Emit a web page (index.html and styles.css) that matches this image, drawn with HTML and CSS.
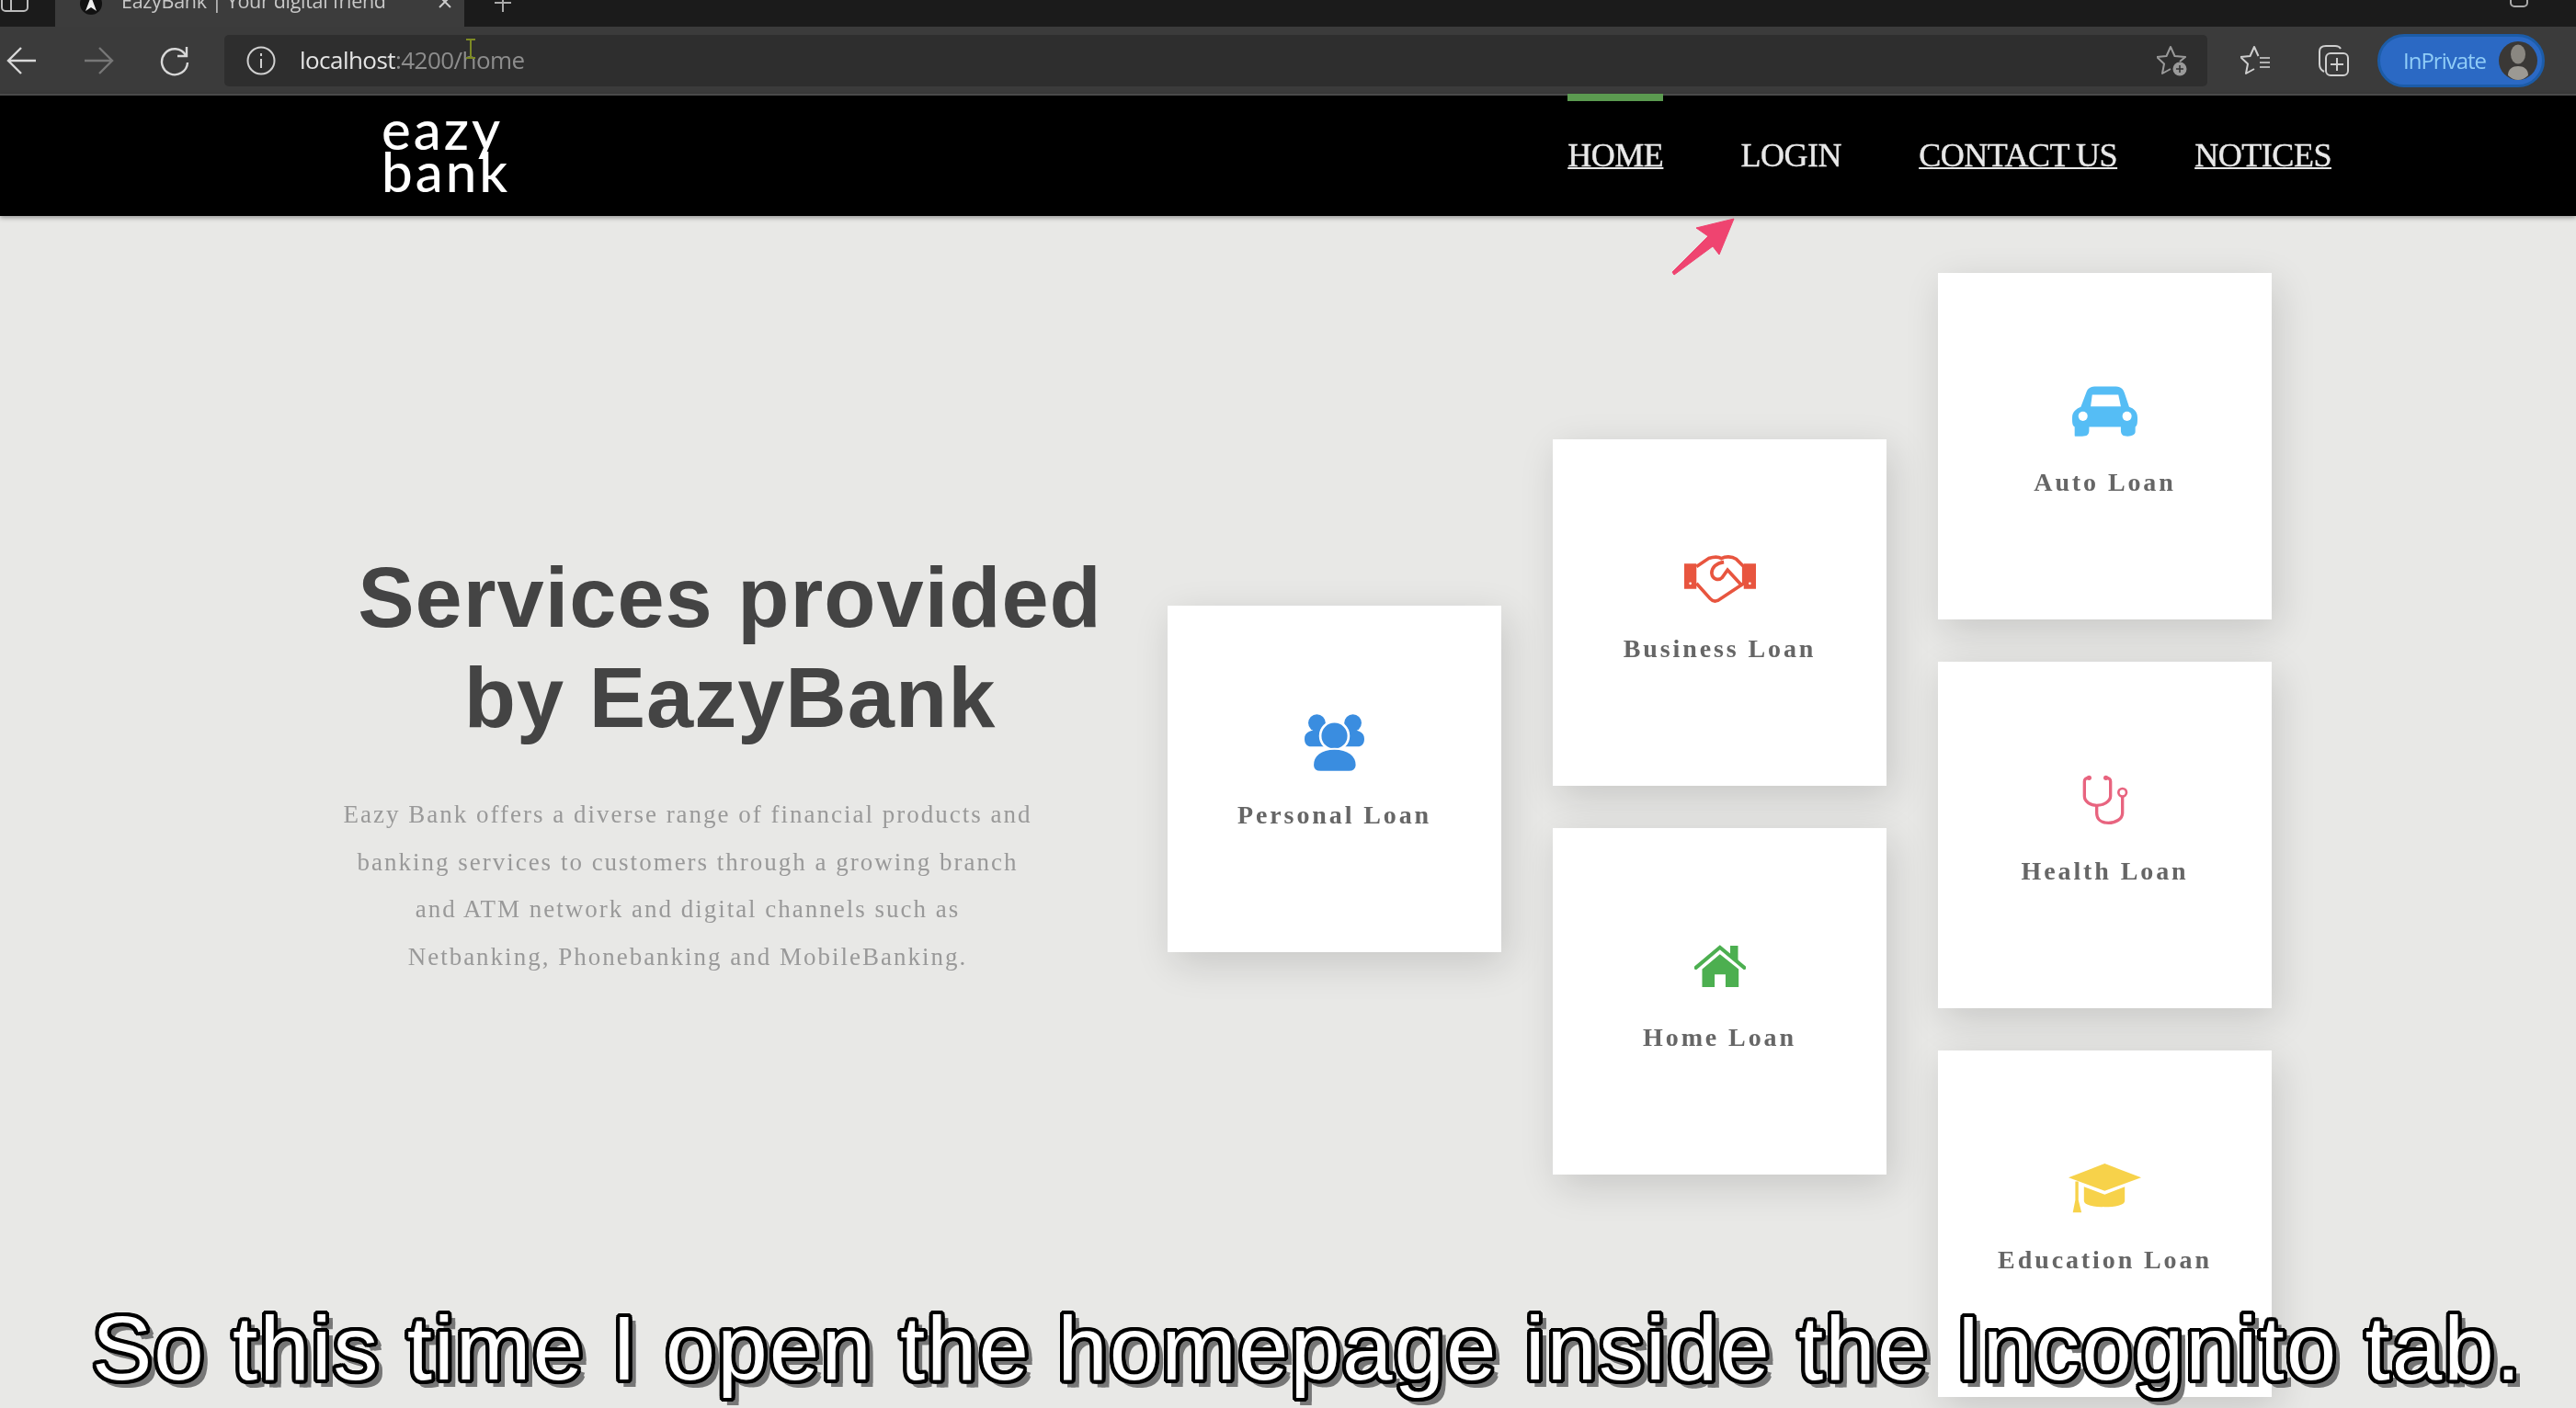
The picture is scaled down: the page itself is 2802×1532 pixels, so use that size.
FILE: index.html
```html
<!DOCTYPE html>
<html>
<head>
    <title>EazyBank | Your digital friend</title>
    <link rel="stylesheet" href="styles.css">
</head>
<body>
    <div class="tabstrip">
        <svg class="tabstrip__actions" width="32" height="14" viewBox="0 0 32 14"><path d="M2 -6V8a4 4 0 0 0 4 4h20a4 4 0 0 0 4-4V-6M12 -6V12" fill="none" stroke="#bbb" stroke-width="2"/></svg>
        <div class="tab">
            <svg class="tab__icon" width="26" height="22" viewBox="0 0 26 22"><circle cx="13" cy="4" r="12" fill="#111"/><path d="M7 12 13 -4l6 16-6-4z" fill="#eee"/></svg>
            <span class="tab__title">EazyBank | Your digital friend</span>
            <svg class="tab__close" width="16" height="14" viewBox="0 0 16 14"><path d="M2 -4 14 8M14 -4 2 8" stroke="#ccc" stroke-width="2"/></svg>
        </div>
        <svg class="tabstrip__new" width="20" height="14" viewBox="0 0 20 14"><path d="M10 -4V13M1 3H19" stroke="#aaa" stroke-width="2"/></svg>
        <svg class="tabstrip__window" width="24" height="10" viewBox="0 0 24 10"><path d="M2 -4V3a4 4 0 0 0 4 4h10a4 4 0 0 0 4-4V-4" fill="none" stroke="#aaa" stroke-width="2"/></svg>
    </div>

    <div class="toolbar">
        <svg class="toolbar__nav" width="34" height="34" viewBox="0 0 34 34"><path d="M32 17H3M16 3 2 17l14 14" fill="none" stroke="#d8d8d8" stroke-width="2.4"/></svg>
        <svg class="toolbar__nav toolbar__nav--off" width="34" height="34" viewBox="0 0 34 34"><path d="M2 17H31M18 3l14 14-14 14" fill="none" stroke="#777" stroke-width="2.4"/></svg>
        <svg class="toolbar__nav" width="34" height="34" viewBox="0 0 34 34"><path d="M29 11A14 14 0 1 0 31 19M30 2V12H20" fill="none" stroke="#d8d8d8" stroke-width="2.4"/></svg>
        <div class="address">
            <svg width="32" height="32" viewBox="0 0 32 32"><circle cx="16" cy="16" r="14.5" fill="none" stroke="#d0d0d0" stroke-width="2"/><path d="M16 14V24M16 8V11" stroke="#d0d0d0" stroke-width="2"/></svg>
            <div class="address__url"><b>localhost</b>:4200/home</div>
            <svg class="address__star" width="34" height="34" viewBox="0 0 34 34"><path d="M25 18 31 13 19.500 12 15 2 10.500 12 0 13 8 20.500 6 31 15 26" fill="none" stroke="#9a9a9a" stroke-width="2" stroke-linejoin="round"/><circle cx="25" cy="26" r="7.500" fill="#9a9a9a"/><path d="M25 22v8M21 26h8" stroke="#333" stroke-width="1.600"/></svg>
        </div>
        <svg class="toolbar__tool" width="34" height="34" viewBox="0 0 34 34"><path d="M19.500 12 15 2 10.500 12 0 13 8 20.500 6 31 15 26" fill="none" stroke="#cfcfcf" stroke-width="2" stroke-linejoin="round"/><path d="M21 14H32M21 19H32M21 24H32" stroke="#b0b0b0" stroke-width="2"/></svg>
        <svg class="toolbar__tool" width="34" height="36" viewBox="0 0 34 36"><path d="M7 30C3 28 2 26 2 22V8C2 4 5 2 9 2h10c3 0 5 1 6 3" fill="none" stroke="#cfcfcf" stroke-width="2"/><rect x="9" y="10" width="24" height="24" rx="5" fill="none" stroke="#cfcfcf" stroke-width="2"/><path d="M21 15V29M14 22H28" stroke="#cfcfcf" stroke-width="2"/></svg>
        <div class="inprivate">
            <span>InPrivate</span>
            <svg width="42" height="42" viewBox="0 0 42 42"><circle cx="21" cy="21" r="21" fill="#3a3836"/><ellipse cx="21" cy="14" rx="8" ry="10.500" fill="#8a8781"/><path d="M10 37C10 30 15 27 21 27s11 3 11 10c-3 3-7 5-11 5s-8-2-11-5z" fill="#9c9993"/></svg>
        </div>
        <svg class="cursor" width="14" height="22" viewBox="0 0 14 22"><path d="M2 1H12M7 1V21M2 21H12" stroke="#7d8a24" stroke-width="2"/></svg>
    </div>

    <header class="site-nav">
        <div class="logo">eazy<br>bank</div>
        <nav class="site-nav__links">
            <a class="site-nav__link site-nav__link--active">HOME</a>
            <a class="site-nav__link site-nav__link--plain">LOGIN</a>
            <a class="site-nav__link">CONTACT US</a>
            <a class="site-nav__link">NOTICES</a>
        </nav>
    </header>

    <svg class="pointer" width="72" height="64" viewBox="0 0 72 64"><path d="M69 1 28 11 41 20 2 59 4 62 46 31 53 40z" fill="#ef4470" stroke="#ef4470" stroke-linejoin="round"/></svg>

    <main class="services">
        <section class="intro">
            <h1>Services provided<br>by EazyBank</h1>
            <p>Eazy Bank offers a diverse range of financial products and<br>banking services to customers through a growing branch<br>and ATM network and digital channels such as<br>Netbanking, Phonebanking and MobileBanking.</p>
        </section>

        <div class="loans">
            <div class="loans__col loans__col--low">
                <div class="card">
                    <div class="card__icon">
                        <svg width="67" height="64" viewBox="0 0 200 190">
                            <circle cx="43" cy="28" r="28" fill="#3a8de0"/>
                            <circle cx="160" cy="28" r="28" fill="#3a8de0"/>
                            <path d="M3 80C3 60 20 52 40 52H70V105H25C10 105 3 95 3 80zM197 80C197 60 180 52 160 52H130V105H175C190 105 197 95 197 80z" fill="#3a8de0"/>
                            <circle cx="100" cy="70" r="46" fill="#3a8de0" stroke="#fff" stroke-width="8"/>
                            <path d="M30 165C30 135 55 112 100 112S172 135 172 165C172 180 160 187 148 187H55C42 187 30 180 30 165z" fill="#3a8de0" stroke="#fff" stroke-width="6"/>
                        </svg>
                    </div>
                    <h3>Personal Loan</h3>
                </div>
            </div>
            <div class="loans__col loans__col--mid">
                <div class="card">
                    <div class="card__icon card__icon--low">
                        <svg width="78" height="52" viewBox="0 0 235 155">
                            <path d="M0 27H40V110H0zM195 27H235V110H195z" fill="#e8553f"/>
                            <circle cx="20" cy="92" r="4" fill="#fff"/><circle cx="215" cy="92" r="4" fill="#fff"/>
                            <path d="M40 37 80 10C100 3 115 6 122 10 135 3 155 3 170 12L195 37V92L110 148C100 152 92 150 85 142L40 92" fill="none" stroke="#e8553f" stroke-width="11"/>
                            <path d="M130 22C105 25 90 40 90 58 92 78 112 85 125 72L142 48 190 100" fill="none" stroke="#e8553f" stroke-width="11"/>
                        </svg>
                    </div>
                    <h3>Business Loan</h3>
                </div>
                <div class="card">
                    <div class="card__icon">
                        <svg width="56" height="46" viewBox="0 0 165 135">
                            <path d="M5 73 82 8l78 65" fill="none" stroke="#4caf50" stroke-width="12" stroke-linecap="round"/>
                            <path d="M115 3h25v50l-25-20z" fill="#4caf50"/>
                            <path d="M25 78 82 30l60 48v57H100V95H65v40H25z" fill="#4caf50"/>
                        </svg>
                    </div>
                    <h3>Home Loan</h3>
                </div>
            </div>
            <div class="loans__col">
                <div class="card">
                    <div class="card__icon">
                        <svg width="71" height="56" viewBox="0 0 212 165">
                            <path d="M10 165a2 2 0 0 1-2-2V135C0 130 0 120 0 105 0 85 15 75 28 70L45 25C50 8 60 3 80 3H135C155 3 165 8 170 25L185 70C200 75 212 85 212 105 212 120 212 130 205 135V150C205 160 195 165 180 165 165 165 158 160 158 145V135H55V145C55 160 48 165 32 165z" fill="#55bdf5"/>
                            <path d="M65 30H150L158 68H60z" fill="#fff"/>
                            <circle cx="35" cy="100" r="15" fill="#fff"/><circle cx="178" cy="100" r="15" fill="#fff"/>
                        </svg>
                    </div>
                    <h3>Auto Loan</h3>
                </div>
                <div class="card">
                    <div class="card__icon">
                        <svg width="52" height="54" viewBox="0 0 156 162">
                            <path d="M25 10C14 10 10 14 10 22V70C10 88 30 100 50 100S95 88 95 70V22C95 14 90 10 80 10" fill="none" stroke="#e8647f" stroke-width="10"/>
                            <path d="M50 100V125C50 145 65 157 88 157S134 145 134 125V72" fill="none" stroke="#e8647f" stroke-width="10"/>
                            <circle cx="25" cy="10" r="8" fill="#e8647f"/><circle cx="80" cy="10" r="8" fill="#e8647f"/>
                            <circle cx="134" cy="58" r="13" fill="none" stroke="#e8647f" stroke-width="8"/>
                        </svg>
                    </div>
                    <h3>Health Loan</h3>
                </div>
                <div class="card">
                    <div class="card__icon">
                        <svg width="79" height="54" viewBox="0 0 235 160">
                            <path d="M0 45 117 0 235 45 117 88z" fill="#f7d24a"/>
                            <path d="M50 75 117 100 182 75V120C182 135 150 140 117 140S50 135 50 120z" fill="#f7d24a"/>
                            <path d="M22 58H32V118L42 158H14L22 118z" fill="#f7d24a"/>
                        </svg>
                    </div>
                    <h3>Education Loan</h3>
                </div>
            </div>
        </div>
    </main>

    <div class="caption">So this time I open the homepage inside the Incognito tab.</div>
</body>
</html>
```

FILE: styles.css
```css
*, ::after, ::before {
    box-sizing: border-box;
}

html, body {
    height: 100%;
}

body {
    margin: 0;
    overflow: hidden;
    position: relative;
    background: #e8e8e6;
    font-family: "Liberation Serif", serif;
}

/* browser chrome */
.tabstrip {
    height: 29px;
    background: #1b1b1b;
    display: flex;
    align-items: flex-end;
    position: relative;
    overflow: hidden;
}

.tabstrip__actions {
    position: absolute;
    left: 0;
    top: 0;
}

.tab {
    margin-left: 60px;
    width: 445px;
    height: 29px;
    background: #3c3c3c;
    display: flex;
    align-items: flex-start;
    filter: blur(.6px);
}

.tab__icon {
    margin-left: 26px;
}

.tab__title {
    margin-left: 20px;
    margin-top: -11px;
    width: 336px;
    font: 21.500px/24px "Open Sans", sans-serif;
    color: #c8c8c8;
    letter-spacing: -.3px;
    white-space: nowrap;
}

.tab__close {
    margin-left: 8px;
}

.tabstrip__new {
    position: absolute;
    left: 537px;
    top: 0;
}

.tabstrip__window {
    position: absolute;
    left: 2729px;
    top: 0;
}

.toolbar {
    height: 73px;
    background: #3b3b3b;
    display: flex;
    align-items: center;
    padding-left: 7px;
    position: relative;
    filter: blur(.5px);
}

.toolbar__nav {
    margin-right: 49px;
}

.toolbar__nav--off + .toolbar__nav {
    margin-right: 37px;
}

.address {
    width: 2157px;
    height: 56px;
    background: #2e2e2e;
    border-radius: 5px;
    display: flex;
    align-items: center;
    padding: 0 21px 0 24px;
}

.address__url {
    margin-left: 26px;
    margin-top: -2px;
    font: 26px "Open Sans", sans-serif;
    letter-spacing: -.55px;
    color: #8d8d8d;
    flex: 1;
}

.address__url b {
    font-weight: 400;
    color: #e4e4e4;
}

.toolbar__tool {
    margin-left: 36px;
}

.toolbar__tool + .toolbar__tool {
    margin-left: 50px;
}

.inprivate {
    width: 182px;
    height: 58px;
    margin-left: 31px;
    border-radius: 29px;
    border: 3px solid #1c5ca8;
    background: #2b69c4;
    display: flex;
    align-items: center;
    justify-content: space-between;
    padding: 0 5px 0 25px;
    font: 24px "Open Sans", sans-serif;
    letter-spacing: -1px;
    color: #90cdf7;
}

.cursor {
    position: absolute;
    left: 505px;
    top: 13px;
}

/* site */
.site-nav {
    height: 133px;
    background: #000;
    border-top: 2px solid #4a4a4a;
    display: flex;
    justify-content: space-between;
    padding: 0 266px 0 415px;
    box-shadow: 0 2px 5px rgba(0,0,0,.35);
    position: relative;
}

.logo {
    padding-top: 13px;
    font: 500 60px/46px Lato, sans-serif;
    color: #fff;
    letter-spacing: 3px;
    filter: blur(.7px);
}

.site-nav__links {
    display: flex;
    gap: 84px;
    margin-top: -2px;
}

.site-nav__link {
    border-top: 8px solid transparent;
    padding-top: 38px;
    height: 100px;
    font-size: 36px;
    letter-spacing: -.45px;
    word-spacing: -1px;
    color: #e8e8e8;
    -webkit-text-stroke: .4px #e8e8e8;
    text-decoration: underline;
    text-decoration-thickness: 2px;
    filter: blur(.5px);
}

.site-nav__link--active {
    border-top-color: #5b9a50;
}

.site-nav__link--plain {
    text-decoration: none;
}

.pointer {
    position: absolute;
    left: 1817px;
    top: 237px;
}

.services {
    display: flex;
    padding-left: 348px;
}

.intro {
    width: 922px;
    padding-top: 361px;
}

h1 {
    margin: 0;
    width: 892px;
    text-align: center;
    font: 700 92px/109px "Liberation Sans", sans-serif;
    letter-spacing: 1px;
    color: #444;
    filter: blur(.6px);
}

.intro p {
    margin: 47px 0 0;
    width: 800px;
    text-align: center;
    font-size: 27px;
    line-height: 51.500px;
    letter-spacing: 2px;
    color: #999;
    filter: blur(.7px);
}

.loans {
    display: flex;
    gap: 56px;
}

.loans__col {
    padding-top: 62px;
    display: flex;
    flex-direction: column;
    gap: 46px;
}

.loans__col--mid {
    padding-top: 243px;
}

.loans__col--low {
    padding-top: 424px;
}

.card {
    width: 363px;
    height: 377px;
    background: #fff;
    box-shadow: 6px 12px 40px rgba(0,0,0,.14);
    padding-top: 110px;
    text-align: center;
}

.card__icon {
    height: 80px;
    display: flex;
    align-items: center;
    justify-content: center;
    filter: blur(.5px);
}

.card__icon--low {
    padding-top: 4px;
}

.card h3 {
    margin: 22px 0 0;
    font-size: 28px;
    line-height: 31px;
    font-weight: 700;
    letter-spacing: 2.900px;
    color: #666;
    filter: blur(.6px);
}

.caption {
    position: absolute;
    left: 100px;
    top: 1414px;
    white-space: nowrap;
    font: 400 98px/106px "Liberation Sans", sans-serif;
    letter-spacing: 2px;
    color: #fff;
    text-shadow:
        4px 0 0 #000, -4px 0 0 #000, 0 4px 0 #000, 0 -4px 0 #000,
        3px 3px 0 #000, -3px 3px 0 #000, 3px -3px 0 #000, -3px -3px 0 #000,
        4px 2px 0 #000, -4px 2px 0 #000, 4px -2px 0 #000, -4px -2px 0 #000,
        2px 4px 0 #000, -2px 4px 0 #000, 2px -4px 0 #000, -2px -4px 0 #000,
        8px 8px 0 #777, 8px 4px 0 #777, 4px 8px 0 #777, 7px 7px 0 #777;
}
```
